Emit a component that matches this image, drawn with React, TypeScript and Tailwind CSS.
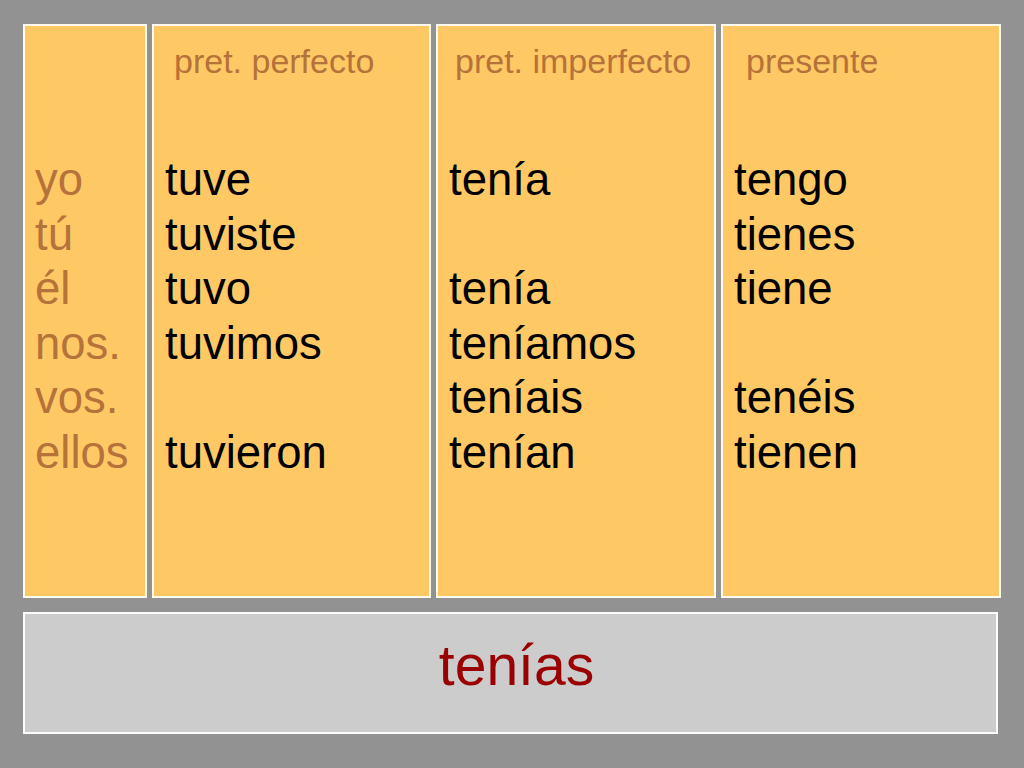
const columns = [
  {
    header: "pret. perfecto",
    headerPad: "pl-[9px]",
    forms: ["tuve", "tuviste", "tuvo", "tuvimos", "", "tuvieron"],
    width: "w-[279px]",
  },
  {
    header: "pret. imperfecto",
    headerPad: "pl-[6px]",
    forms: ["tenía", "", "tenía", "teníamos", "teníais", "tenían"],
    width: "w-[280px]",
  },
  {
    header: "presente",
    headerPad: "pl-[12px]",
    forms: ["tengo", "tienes", "tiene", "", "tenéis", "tienen"],
    width: "w-[280px]",
  },
];

const pronouns = ["yo", "tú", "él", "nos.", "vos.", "ellos"];

export default function App() {
  return (
    <div className="w-[1024px] h-[768px] bg-[#929292] pt-[24px] pl-[23px] font-['Liberation_Sans',Arial,sans-serif] overflow-hidden">
      {/* Conjugation columns */}
      <div className="flex gap-[5px] h-[574px]">
        <div className="w-[124px] h-full bg-[#fec965] border-2 border-[#fffaf0] pl-[10px] pt-[127px]">
          {pronouns.map((p) => (
            <div key={p} className="text-[45.5px] leading-[54.6px] text-[#b5723a]">
              {p}
            </div>
          ))}
        </div>
        {columns.map((col) => (
          <div
            key={col.header}
            className={`${col.width} h-full bg-[#fec965] border-2 border-[#fffaf0] pl-[11px] pt-[15px]`}
          >
            <div className={`${col.headerPad} text-[34px] leading-[40px] text-[#b5723a]`}>
              {col.header}
            </div>
            <div className="mt-[72px]">
              {col.forms.map((f, i) => (
                <div key={i} className="h-[54.6px] text-[45.5px] leading-[54.6px] text-black">
                  {f}
                </div>
              ))}
            </div>
          </div>
        ))}
      </div>

      {/* Answer box */}
      <div className="mt-[14px] w-[975px] h-[122px] bg-[#cccccc] border-2 border-[#fcfcfc] flex justify-center pt-[17px] pl-[12px]">
        <span className="text-[57px] leading-[68px] text-[#9a0000]">tenías</span>
      </div>
    </div>
  );
}
